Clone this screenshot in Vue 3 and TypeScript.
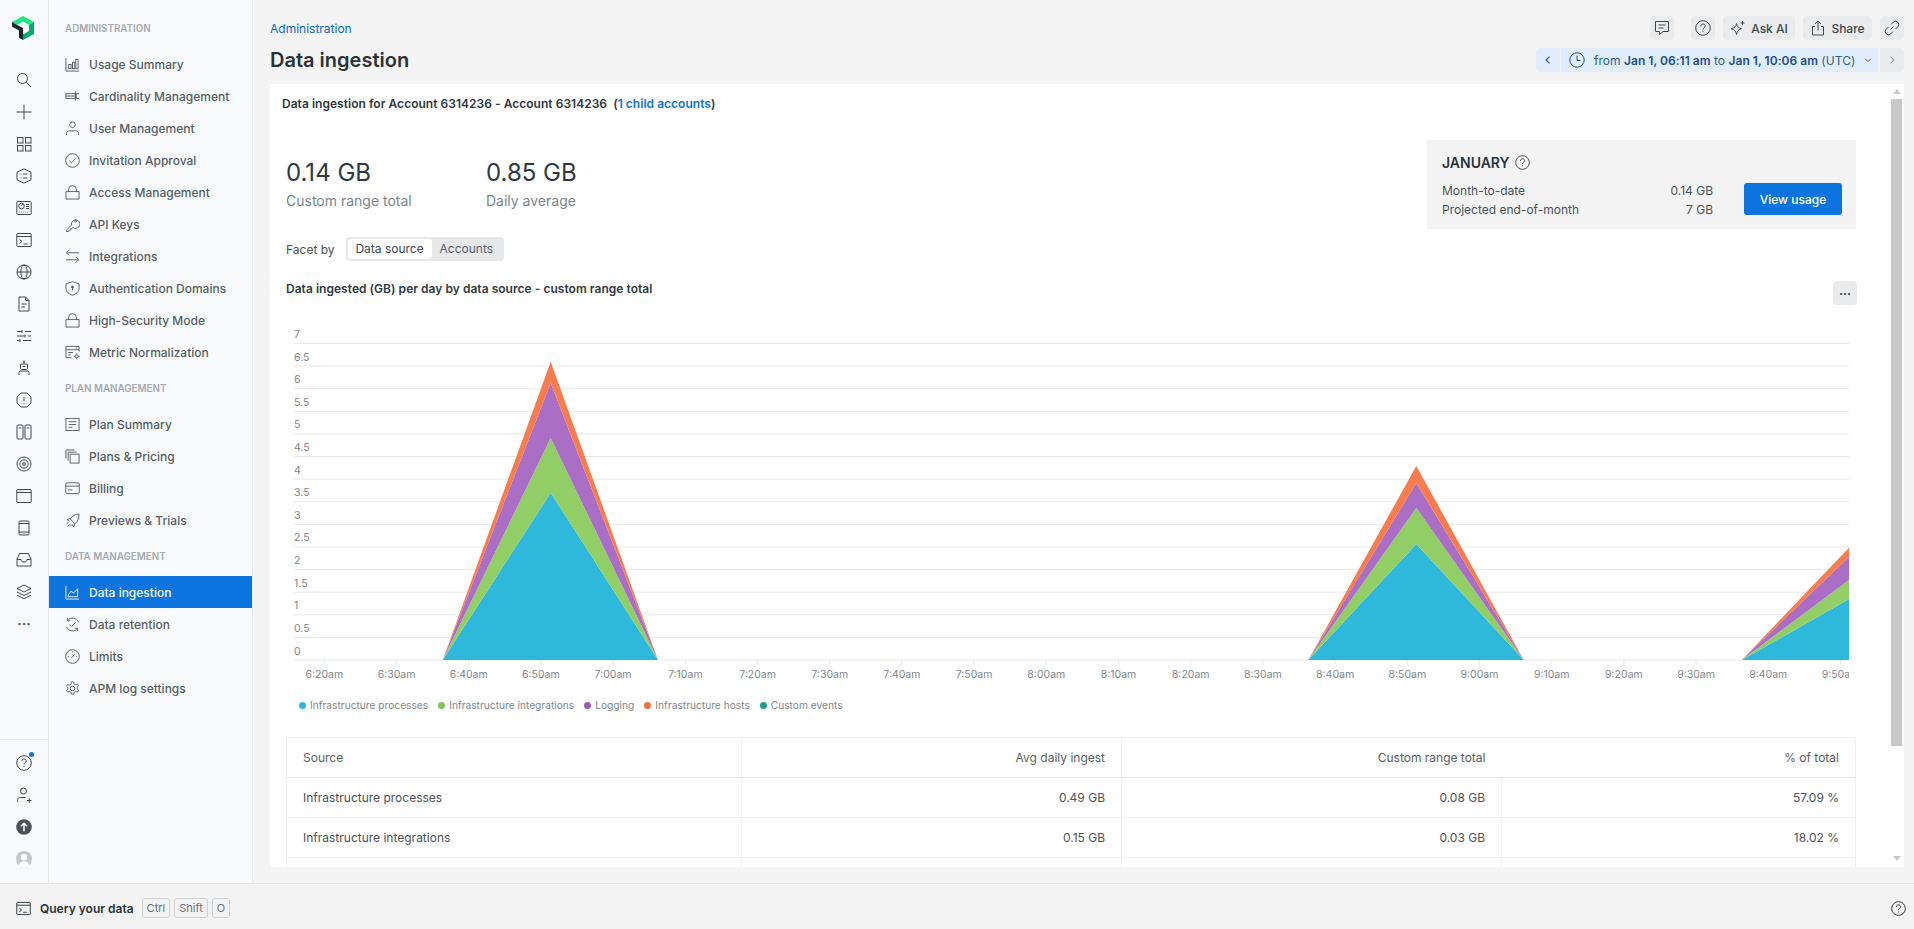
<script setup lang="ts">
const ic: Record<string, string> = {
  search: '<circle cx="6.5" cy="6.5" r="5"/><path d="M10.2 10.2 15 15"/>',
  plus: '<path d="M8 .5v15M.5 8h15"/>',
  grid: '<rect x="1.5" y="1.5" width="5.5" height="5.5"/><rect x="9.5" y="1.5" width="5.5" height="5.5"/><rect x="1.5" y="9.5" width="5.5" height="5.5"/><rect x="9.5" y="9.5" width="5.5" height="5.5"/>',
  hex: '<path d="M8 .8 15 4.2v7.6L8 15.2 1 11.8V4.2z"/><path d="M7 6h4.500M7 10h4.500M4.600 6h.8M4.600 10h.8"/>',
  dash: '<rect x=".8" y="1.5" width="14.4" height="13" rx=".8"/><circle cx="5.5" cy="6" r="2.8"/><path d="m5.5 6 1.3-2.4M10 4.5h3M10 6.5h3M10 8.5h3M3 12h.6M5 12h.6M7 12h.6M9 12h.6M11 12h.6"/>',
  term: '<rect x=".8" y="1.5" width="14.4" height="13" rx=".8"/><path d="M.8 4.5h14.4M3.5 7.5 6 9.5l-2.5 2M7.5 12h4"/>',
  globe: '<circle cx="8" cy="8" r="7"/><ellipse cx="8" cy="8" rx="3.2" ry="7"/><path d="M1 8h14"/>',
  doc: '<path d="M3 1h6.5L13 4.5V15H3z"/><path d="M9.5 1v3.5H13M5.5 8h5M5.5 11h3.5"/>',
  sliders: '<path d="M1 3.5h5M9 3.5h6M1 8h8M12 8h3M1 12.5h3M7 12.5h8M6 2v3M9 6.5v3M4 11v3"/>',
  robot: '<rect x="4.5" y="4" width="7" height="5.5" rx="1"/><path d="M8 1.5V4M6.5 6.5h3M3 15v-2.5a1.5 1.5 0 0 1 1.5-1.5h7a1.5 1.5 0 0 1 1.5 1.5V15"/><circle cx="8" cy="1.5" r=".7"/>',
  alert: '<path d="M5 1h6l4 4v6l-4 4H5l-4-4V5z" stroke-linejoin="round"/><path d="M8 4.5V9M8 11v.8"/>',
  columns: '<rect x="1" y="1" width="6" height="14" rx="1"/><rect x="9" y="1" width="6" height="14" rx="1"/><path d="M2.8 4h2.4M10.8 4h2.4"/>',
  target: '<circle cx="8" cy="8" r="7"/><circle cx="8" cy="8" r="4.2"/><circle cx="8" cy="8" r="1.5"/>',
  browser: '<rect x=".8" y="1.5" width="14.4" height="13" rx=".8"/><path d="M.8 4.5h14.4M2.7 3h.6M4.7 3h.6M6.7 3h.6"/>',
  mobile: '<rect x="3" y="1" width="10" height="14" rx="1.2"/><path d="M3 3.5h10M3 12h10M7.6 13.5h.8"/>',
  inbox: '<path d="M3.5 1.5h9L15 7.5V14H1V7.5z" stroke-linejoin="round"/><path d="M1 7.5h4c0 1.5 1 2.500 3 2.500s3-1 3-2.500h4"/>',
  layers: '<path d="M8 1 15 4.500 8 8 1 4.500zM1 8l7 3.500L15 8M1 11.200l7 3.500 7-3.500"/>',
  usage: '<path d="M1 1v14h14"/><rect x="4" y="8" width="2.5" height="4.5"/><rect x="8" y="5.5" width="2.5" height="7"/><rect x="11.5" y="2.5" width="2.5" height="10"/>',
  card: '<rect x="1" y="5" width="11" height="5"/><path d="M1 7.5h11M11 2.5v10M11 5h4M11 10h4"/>',
  user: '<circle cx="8" cy="4" r="3"/><path d="M1.5 15v-1.5c0-2 1.5-3 3-3h7c1.500 0 3 1 3 3V15"/>',
  check: '<circle cx="8" cy="8" r="7.300"/><path d="m4.500 8.300 2.400 2.200 4.500-4.700"/>',
  lock: '<path d="M1 7h14v8H1zM4 7V4a4 3.300 0 0 1 8 0v3"/>',
  key: '<path d="M7 8.500 1.500 14v1.500H4l.5-1.500H6v-1.500h1.500L8.500 11A4.500 4.500 0 1 0 7 8.500z" stroke-linejoin="round"/><circle cx="11.500" cy="4.500" r="1"/>',
  swap: '<path d="M15 4H1.500M4.500 1 1.500 4l3 3M1 11.500h13.500M11.500 8.500l3 3-3 3"/>',
  shield: '<path d="M8 .8 15 3v5c0 3.500-3.500 6-7 7.200C4.500 14 1 11.500 1 8V3z"/><circle cx="8" cy="6.500" r="1.100" fill="currentColor"/><path d="M8 7v3"/>',
  metric: '<path d="M7 13.500H1V1.500h14V7"/><path d="M1 5h14M3.500 8h5M3.500 10.500h2.500M11.500 3.200h1.500"/><circle cx="12.500" cy="12" r="1.700"/><path d="M12.500 8.800v1.500M12.500 13.700v1.500M9.300 12h1.500M14.200 12h1.500"/>',
  plan: '<rect x="1" y="1.500" width="14" height="13"/><path d="M4 5h8M4 8h8M4 11h4"/>',
  copy: '<rect x="5.500" y="5.500" width="9.500" height="9.500"/><path d="M3.300 12.500V3.300h9.200M1 10V1h9"/>',
  bill: '<rect x=".8" y="2" width="14.400" height="11.500" rx="1.200"/><path d="M.8 5.500h14.400M3 9.500h5"/>',
  rocket: '<path d="M15 1c-4 .3-7 2-9.500 5L8 9 10.500 11.500C13.500 9 14.800 6 15 1zM5.500 6 2 7l3 2M10.500 11.500l-1 3.500-2-3M3.500 10l-2 2M5 12l-2.500 2.500M6.500 13l-1.500 1.500"/>',
  ingest: '<path d="M1 1v14h14"/><path d="m3.500 10.500 3-4 2.500 2 4.500-4.500v8.500h-10z"/>',
  retain: '<path d="M14.300 5.500A7 7 0 0 0 2.700 3.400M1.700 10.500a7 7 0 0 0 11.600 2.100M2.500 1v3h3M13.500 15v-3h-3"/><path d="m5 8 2 2 4-4"/>',
  gauge: '<circle cx="8" cy="8" r="7.300"/><path d="m6.800 9.200 3.500-3.500M8 2.500v1M3 8h1M12 8h1"/>',
  gear: '<circle cx="8" cy="8" r="2.400"/><path d="M6.800 1h2.400l.4 2 1.600.9 2-.7 1.200 2-1.500 1.400v1.800l1.500 1.400-1.200 2-2-.7-1.600.9-.4 2H6.800l-.4-2-1.600-.9-2 .7-1.200-2 1.500-1.400V7.100L1.600 5.700l1.200-2 2 .7 1.600-.9z" stroke-linejoin="round"/>',
  help: '<circle cx="8" cy="8" r="7.300"/><path d="M5.800 6.200C5.800 4.900 6.800 4 8 4s2.200.9 2.200 2.100c0 1.700-2.200 1.700-2.200 3.400M8 11.200v.9"/>',
  adduser: '<circle cx="7.500" cy="4" r="3"/><path d="M1.500 15v-1.500c0-2 1-3 3-3h5M11 13.500h4.500M13.200 11.200v4.600"/>',
  chat: '<path d="M1.500 1.500h13v10H9l-3.500 3v-3h-4z" stroke-linejoin="round"/><path d="M4.500 5h7M4.500 8h5"/>',
  sparkle: '<path d="M6.500 3.500C7 6.500 8.500 8 11.500 8.800 8.500 9.500 7 11 6.500 14.500 6 11 4.500 9.500 1 8.800 4.500 8 6 6.500 6.500 3.500z" stroke-linejoin="round"/><path d="M12.500 1v4M10.500 3h4"/>',
  share: '<path d="M5 6.500H2.500V15h11V6.500H11M8 10.500V1M5 3.800 8 1l3 2.800"/>',
  link: '<path d="M6.500 9.500 9.500 6.500M7 4.500 9.500 2a3.200 3.200 0 0 1 4.500 4.500L11.500 9M9 11.500 6.500 14A3.200 3.200 0 0 1 2 9.500L4.500 7"/>',
  clock: '<circle cx="8" cy="8" r="7.200"/><path d="M8 3.500V8.500H11.500"/>',
  chevL: '<path d="M10 3.500 5.500 8l4.500 4.500"/>',
  chevR: '<path d="M6 3.500 10.500 8 6 12.500"/>',
  chevD: '<path d="M3.500 6 8 10.500 12.500 6"/>',
}

const railTop = ['search', 'plus', 'grid', 'hex', 'dash', 'term', 'globe', 'doc', 'sliders', 'robot', 'alert', 'columns', 'target', 'browser', 'mobile', 'inbox', 'layers']

const groups = [
  { title: 'ADMINISTRATION', items: [['usage', 'Usage Summary'], ['card', 'Cardinality Management'], ['user', 'User Management'], ['check', 'Invitation Approval'], ['lock', 'Access Management'], ['key', 'API Keys'], ['swap', 'Integrations'], ['shield', 'Authentication Domains'], ['lock', 'High-Security Mode'], ['metric', 'Metric Normalization']] },
  { title: 'PLAN MANAGEMENT', items: [['plan', 'Plan Summary'], ['copy', 'Plans & Pricing'], ['bill', 'Billing'], ['rocket', 'Previews & Trials']] },
  { title: 'DATA MANAGEMENT', items: [['ingest', 'Data ingestion'], ['retain', 'Data retention'], ['gauge', 'Limits'], ['gear', 'APM log settings']] },
]

// chart geometry: the svg's origin sits at the left edge of the chart block (x = 286)
const ox = 286
const oy = 325
const base = 660 - oy
const left = 294 - ox
const right = 1849 - ox
const stepY = (660 - 343.5) / 14
const yTicks = Array.from({ length: 15 }, (_, i) => ({ label: String(i / 2), y: base - i * stepY }))
const xNames = ['6:20am', '6:30am', '6:40am', '6:50am', '7:00am', '7:10am', '7:20am', '7:30am', '7:40am', '7:50am', '8:00am', '8:10am', '8:20am', '8:30am', '8:40am', '8:50am', '9:00am', '9:10am', '9:20am', '9:30am', '9:40am', '9:50am']
const xTicks = xNames.map((label, i) => ({ label, x: 324.3 - ox + i * 72.2 }))

const colors = ['#2db8dc', '#92ce66', '#aa6fc5', '#f97c4e']
function peak(a: number, m: number, b: number, tops: number[]) {
  return tops.map((t, i) => {
    const prev = i === 0 ? 660 : tops[i - 1]
    const pts = [[a, 660], [m, t], [b, 660]]
    if (i > 0) pts.push([m, prev])
    return { d: pts.map(p => `${p[0] - ox},${p[1] - oy}`).join(' '), c: colors[i] }
  })
}
const t3 = [599, 580, 556.7, 547.7]
const areas = [
  ...peak(442.7, 550.7, 658, [492.7, 438, 383, 361.7]),
  ...peak(1308.3, 1416.3, 1523.8, [544, 508, 483, 466]),
  ...t3.map((t, i) => ({
    d: i === 0
      ? `${1741.8 - ox},${base} ${1849 - ox},${t - oy} ${1849 - ox},${base}`
      : `${1741.8 - ox},${base} ${1849 - ox},${t - oy} ${1849 - ox},${t3[i - 1] - oy}`,
    c: colors[i],
  })),
]

const legend = [
  ['#2db8dc', 'Infrastructure processes'],
  ['#7fc857', 'Infrastructure integrations'],
  ['#9b59b6', 'Logging'],
  ['#f4703f', 'Infrastructure hosts'],
  ['#1f9d8c', 'Custom events'],
]
const rows = [
  ['Infrastructure processes', '0.49 GB', '0.08 GB', '57.09 %'],
  ['Infrastructure integrations', '0.15 GB', '0.03 GB', '18.02 %'],
  ['', '', '', ''],
]
</script>

<template>
  <div class="app">
    <div class="top">
      <nav class="rail">
        <svg class="logo" viewBox="0 0 22 24" width="22" height="24">
          <path d="M0 6 11 0 22 6 17 9 11 5.500 5.200 9z" fill="#1ce783" />
          <path d="M22 6V18L11 24V18.500L17 15V9z" fill="#00ac69" />
          <path d="M0 6 5.200 9 11 12V24L7 21.700V14.500L0 10.500z" fill="#1d252c" />
        </svg>
        <div class="rail-list">
          <svg v-for="n in railTop" :key="n" class="ri" viewBox="0 0 16 16" v-html="ic[n]" />
          <span class="rail-dots">···</span>
        </div>
        <div class="rail-bottom">
          <span class="help-wrap">
            <svg class="ri" viewBox="0 0 16 16" v-html="ic.help" />
            <i class="dot"></i>
          </span>
          <svg class="ri" viewBox="0 0 16 16" v-html="ic.adduser" />
          <svg class="ri" viewBox="0 0 16 16">
            <circle cx="8" cy="8" r="7.8" fill="#4c5157" stroke="none" />
            <path d="M8 12.300V4.200M4.800 7.300 8 4.200l3.200 3.100" stroke="#fff" stroke-width="1.5" />
          </svg>
          <svg class="ri avatar" viewBox="0 0 16 16">
            <circle cx="8" cy="8" r="8" fill="#c4c6c8" stroke="none" />
            <circle cx="8" cy="6.300" r="3.200" fill="#fff" stroke="none" />
            <path d="M2.800 14.200C3.500 11.300 5.500 10.300 8 10.300s4.500 1 5.200 3.900A8 8 0 0 1 2.800 14.200z" fill="#fff" stroke="none" />
          </svg>
        </div>
      </nav>

      <aside class="sub">
        <section v-for="g in groups" :key="g.title" class="group">
          <h4>{{ g.title }}</h4>
          <a v-for="it in g.items" :key="it[1]" class="item" :class="{ active: it[1] === 'Data ingestion' }">
            <svg viewBox="0 0 16 16" v-html="ic[it[0]]" />
            <span>{{ it[1] }}</span>
          </a>
        </section>
      </aside>

      <main class="main">
        <header class="head">
          <div class="head-left">
            <a class="crumb">Administration</a>
            <h1>Data ingestion</h1>
          </div>
          <div class="head-right">
            <div class="actions">
              <button class="tb sq first"><svg viewBox="0 0 16 16" v-html="ic.chat" /></button>
              <button class="tb sq second"><svg viewBox="0 0 16 16" v-html="ic.help" /></button>
              <button class="tb ai"><svg viewBox="0 0 16 16" v-html="ic.sparkle" />Ask AI</button>
              <button class="tb sharebtn"><svg viewBox="0 0 16 16" v-html="ic.share" />Share</button>
              <button class="tb sq"><svg viewBox="0 0 16 16" v-html="ic.link" /></button>
            </div>
            <div class="time">
              <button class="t-prev"><svg viewBox="0 0 16 16" v-html="ic.chevL" /></button>
              <div class="t-main">
                <svg class="t-clock" viewBox="0 0 16 16" v-html="ic.clock" />
                <span>from <b>Jan 1, 06:11 am</b> to <b>Jan 1, 10:06 am</b> (UTC)</span>
                <svg class="t-chev" viewBox="0 0 16 16" v-html="ic.chevD" />
              </div>
              <button class="t-next"><svg viewBox="0 0 16 16" v-html="ic.chevR" /></button>
            </div>
          </div>
        </header>

        <div class="panel">
          <div class="content">
            <p class="acct">Data ingestion for Account 6314236 - Account 6314236 &nbsp;(<a>1 child accounts</a>)</p>

            <div class="summary">
              <div class="stats">
                <div class="stat">
                  <div class="num">0.14 GB</div>
                  <div class="lab">Custom range total</div>
                </div>
                <div class="stat">
                  <div class="num">0.85 GB</div>
                  <div class="lab">Daily average</div>
                </div>
              </div>
              <div class="jan">
                <div class="jan-text">
                  <div class="jan-title">JANUARY
                    <svg viewBox="0 0 16 16" v-html="ic.help" />
                  </div>
                  <div class="jan-row"><span>Month-to-date</span><span>0.14 GB</span></div>
                  <div class="jan-row"><span>Projected end-of-month</span><span>7 GB</span></div>
                </div>
                <button class="primary">View usage</button>
              </div>
            </div>

            <div class="facet">
              <span>Facet by</span>
              <div class="seg"><span class="on">Data source</span><span>Accounts</span></div>
            </div>

            <div class="chart-head">
              <h3>Data ingested (GB) per day by data source - custom range total</h3>
              <button class="more">···</button>
            </div>

            <svg class="chart" :viewBox="`0 0 1570 370`" width="1570" height="370">
              <g stroke="#e8e9ea" stroke-width="1">
                <line v-for="t in yTicks" :key="t.label" :x1="left" :x2="right" :y1="t.y" :y2="t.y" />
                <line v-for="t in xTicks" :key="t.label" :x1="t.x" :x2="t.x" :y1="base" :y2="base + 5" />
              </g>
              <polygon v-for="(a, i) in areas" :key="i" :points="a.d" :fill="a.c" />
              <text v-for="t in yTicks" :key="t.label" :x="left" :y="t.y - 5.5" class="tick">{{ t.label }}</text>
              <svg :x="0" :y="base" :width="right" height="30">
                <text v-for="t in xTicks" :key="t.label" :x="t.x" y="18" class="tick mid">{{ t.label }}</text>
              </svg>
            </svg>

            <div class="legend">
              <span v-for="l in legend" :key="l[1]" class="leg"><i :style="{ background: l[0] }"></i>{{ l[1] }}</span>
            </div>

            <table class="tbl">
              <thead>
                <tr><th>Source</th><th>Avg daily ingest</th><th>Custom range total</th><th>% of total</th></tr>
              </thead>
              <tbody>
                <tr v-for="(r, i) in rows" :key="i">
                  <td v-for="(c, j) in r" :key="j">{{ c }}</td>
                </tr>
              </tbody>
            </table>
          </div>
          <div class="scroll">
            <i class="arrow"></i>
            <div class="thumb"></div>
            <i class="arrow down"></i>
          </div>
        </div>
      </main>
    </div>

    <footer class="bar">
      <svg class="bar-ic" viewBox="0 0 16 16" v-html="ic.term" />
      <strong>Query your data</strong>
      <kbd>Ctrl</kbd><kbd>Shift</kbd><kbd>O</kbd>
      <svg class="bar-help" viewBox="0 0 16 16" v-html="ic.help" />
    </footer>
  </div>
</template>

<style>
html, body { margin: 0; padding: 0; overflow: hidden; }
</style>

<style scoped>
.app { width: 1914px; height: 929px; display: flex; flex-direction: column; overflow: hidden; background: #f4f4f4; font-family: Inter, "Noto Sans", sans-serif; color: #293338; }
.top { flex: 1; min-height: 0; display: flex; }
svg { fill: none; stroke: currentColor; stroke-width: 1; flex: none; }

.rail { width: 48px; background: #f9fafb; border-right: 1px solid #e6e8e9; display: flex; flex-direction: column; align-items: center; box-sizing: content-box; color: #3e4850; }
.logo { margin: 16px 3px 0 0; stroke: none; }
.rail-list { margin-top: 32px; display: flex; flex-direction: column; align-items: center; gap: 16px; flex: 1; }
.ri { width: 16px; height: 16px; display: block; }
.rail-dots { height: 16px; line-height: 16px; font-size: 14px; font-weight: 700; color: #555e66; letter-spacing: 0; }
.rail-bottom { border-top: 1px solid #e6e8e9; width: 100%; display: flex; flex-direction: column; align-items: center; gap: 16px; padding: 15px 0 16px; }
.help-wrap { position: relative; display: block; }
.dot { position: absolute; top: -3px; right: -2px; width: 5px; height: 5px; border-radius: 50%; background: #0c74df; }
.avatar { width: 16px; height: 16px; }

.sub { width: 204px; background: #f9fafb; border-right: 1px solid #ececec; padding-top: 20px; box-sizing: border-box; }
.group { margin-bottom: 12px; }
.group h4 { margin: 0 0 12px; padding-left: 16px; height: 16px; line-height: 18px; font-size: 9.8px; font-weight: 600; color: #a5abb0; }
.item { display: flex; align-items: center; height: 32px; padding-left: 16px; gap: 9px; font-size: 12px; font-weight: 500; color: #555e66; box-sizing: border-box; }
.item svg { width: 15px; height: 15px; color: #555e66; }
.item.active { background: #0c74df; color: #f4f8fd; }
.item.active svg { color: #f4f8fd; }

.main { flex: 1; min-width: 0; padding: 16px 10px 16px 17px; display: flex; flex-direction: column; }
.head { display: flex; justify-content: space-between; height: 68px; flex: none; }
.crumb { display: block; font-size: 12px; line-height: 26px; color: #0b6acb; }
h1 { margin: 5px 0 0; font-size: 20px; line-height: 26px; font-weight: 600; color: #293338; }
.head-right { display: flex; flex-direction: column; align-items: flex-end; gap: 8px; }
.actions { display: flex; gap: 8px; }
.tb { height: 24px; border: 0; border-radius: 4px; background: #e9ebec; font: 500 12px Inter, sans-serif; color: #3e4850; display: flex; align-items: center; justify-content: center; gap: 5px; padding: 0 8px; }
.tb svg { width: 16px; height: 16px; }
.sq { width: 24px; padding: 0; }
.first { margin-right: 9px; }
.ai { width: 72px; padding: 0; }
.sharebtn { width: 69px; padding: 0; }
.time { display: flex; gap: 1px; height: 24px; font-size: 12px; letter-spacing: 0.03px; color: #30608f; }
.time button { width: 24px; height: 24px; border: 0; padding: 0; display: flex; align-items: center; justify-content: center; }
.time button svg { width: 12px; height: 12px; stroke-width: 1.5; }
.t-prev { background: #e2edfc; color: #1d4f91; border-radius: 4px 0 0 4px; }
.t-next { background: #e9ebec; color: #9aa0a5; border-radius: 0 4px 4px 0; margin-left: 1px; }
.t-main { width: 317px; background: #e2edfc; display: flex; align-items: center; box-sizing: border-box; padding-left: 8px; white-space: nowrap; }
.t-main b { font-weight: 600; color: #1d4f91; }
.t-clock { width: 16px; height: 16px; margin-right: 9px; color: #1d4f91; }
.t-chev { width: 10px; height: 10px; margin-left: 8px; color: #1d4f91; stroke-width: 1.5; }

.panel { height: 783px; flex: none; background: #fff; display: flex; overflow: hidden; }
.content { flex: 1; min-width: 0; overflow: hidden; }
.scroll { width: 13px; flex: none; display: flex; flex-direction: column; align-items: flex-start; }
.arrow { display: block; width: 0; height: 0; margin: 5px 0 0 2px; border: 4px solid transparent; border-top: 0; border-bottom: 5px solid #c9c9c9; }
.arrow.down { margin: auto 0 6px 2px; border-top: 5px solid #c9c9c9; border-bottom: 0; }
.thumb { width: 11px; height: 647px; margin-top: 5px; background: #c8c8c8; }

.acct { margin: 0 0 0 12px; padding-top: 12px; font-size: 12px; line-height: 16px; font-weight: 600; letter-spacing: 0.03px; color: #2f393f; }
.acct a { color: #0c74df; }
.summary { display: flex; justify-content: space-between; margin: 28px 35px 0 16px; height: 89px; }
.stats { display: flex; padding-top: 18px; }
.stat { width: 200px; }
.num { font-size: 24px; line-height: 30px; font-weight: 400; color: #2f393f; }
.lab { margin-top: 4px; font-size: 14px; line-height: 18px; color: #7c858c; }
.jan { width: 429px; height: 89px; background: #f3f3f3; display: flex; box-sizing: border-box; padding: 14px 14px 14px 15px; justify-content: space-between; }
.jan-text { width: 271px; }
.jan-title { display: flex; align-items: center; gap: 5px; font-size: 14px; font-weight: 600; line-height: 17px; margin-bottom: 10px; }
.jan-title svg { width: 15px; height: 15px; color: #3e4850; }
.jan-row { display: flex; justify-content: space-between; font-size: 12px; line-height: 19px; color: #4a5359; }
.primary { width: 98px; height: 32px; margin-top: 29px; background: #0c74df; color: #fff; border: 0; border-radius: 3px; font: 500 12px Inter, sans-serif; }
.facet { display: flex; align-items: center; gap: 11px; margin: 8px 0 0 16px; height: 24px; font-size: 12px; color: #4a5359; }
.seg { display: flex; width: 158px; height: 24px; background: #e7e8e9; border-radius: 4px; padding: 2px; box-sizing: border-box; color: #5b646b; font-size: 12px; line-height: 20px; }
.seg span { padding: 0 7px; }
.seg .on { width: 84px; box-sizing: border-box; background: #fff; border-radius: 3px; color: #3e4850; text-align: center; padding: 0; margin-right: 1px; }
.chart-head { display: flex; justify-content: space-between; margin: 20px 34px 0 16px; height: 44px; align-items: flex-start; }
h3 { margin: 0; font-size: 12px; line-height: 16px; font-weight: 600; letter-spacing: 0.03px; color: #2f393f; }
.more { width: 24px; height: 24px; border: 0; border-radius: 4px; background: #e9ebec; color: #3e4850; font-size: 12px; font-weight: 700; padding: 0; margin-top: 0; font-family: Inter, sans-serif; }
.chart { display: block; margin-left: 16px; margin-top: 0; stroke: none; }
.tick { font-size: 10.5px; fill: #80878d; stroke: none; font-family: Inter, sans-serif; }
.mid { text-anchor: middle; }
.legend { display: flex; margin: 2px 0 0 29px; height: 16px; align-items: center; font-size: 10.2px; color: #80878d; }
.leg { display: inline-flex; align-items: center; margin-right: 10px; white-space: nowrap; }
.leg i { width: 7px; height: 7px; border-radius: 50%; margin-right: 4px; }
.tbl { margin: 24px 0 0 16px; width: 1570px; border-collapse: collapse; table-layout: fixed; font-size: 12px; color: #4a5359; border: 1px solid #eff0f1; }
.tbl th, .tbl td { height: 40px; padding: 0 16px; box-sizing: border-box; border-left: 1px solid #f1f2f3; border-bottom: 1px solid #f1f2f3; font-weight: 400; text-align: right; }
.tbl th { border-bottom: 1px solid #e5e6e7; color: #555e66; }
.tbl th:first-child, .tbl td:first-child { text-align: left; width: 455px; }
.tbl th:nth-child(2) { width: 380px; }
.tbl th:nth-child(3) { width: 380px; }
.tbl th:nth-child(4) { border-left: 0; }

.bar { height: 46px; flex: none; border-top: 1px solid #e3e4e5; background: #f3f3f3; box-sizing: border-box; display: flex; align-items: center; padding: 3px 8px 0 16px; font-size: 12px; }
.bar-ic { width: 15px; height: 15px; color: #293338; margin-right: 9px; }
.bar strong { font-weight: 600; color: #293338; margin-right: 8px; }
kbd { font: 400 11px Inter, sans-serif; height: 20px; line-height: 18px; box-sizing: border-box; border: 1px solid #cfd1d3; border-radius: 3px; color: #6a7278; padding: 0 4px; margin-right: 4px; }
.bar-help { margin-left: auto; width: 15px; height: 15px; color: #293338; }
</style>
